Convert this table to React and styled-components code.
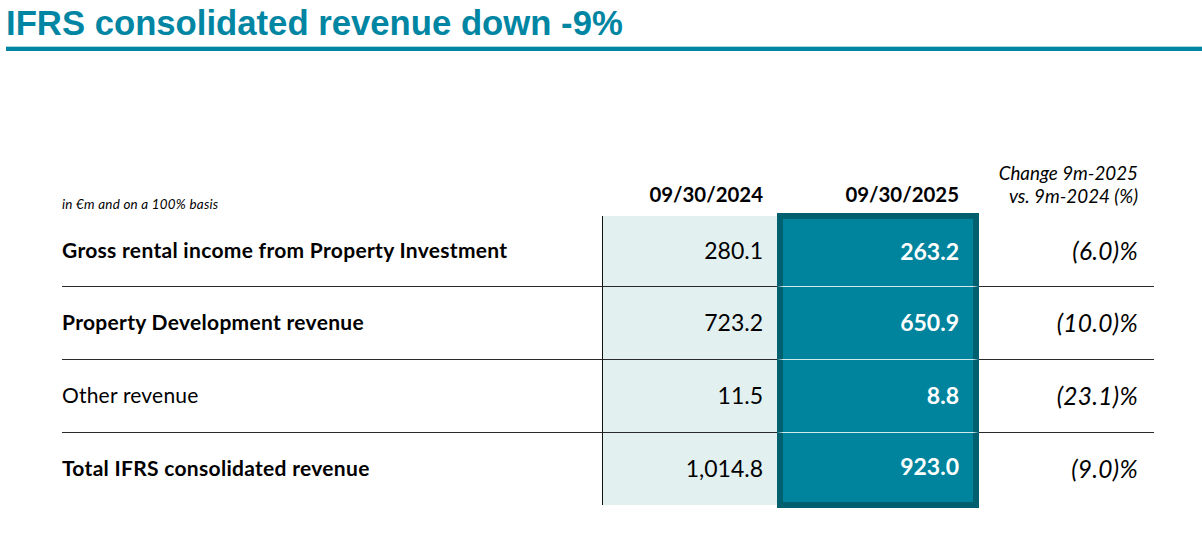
import React from "react";
import styled, { createGlobalStyle } from "styled-components";

const GlobalStyle = createGlobalStyle`
    html, body {
        margin: 0;
        padding: 0;
        background: #ffffff;
    }
    body {
        font-family: Lato, "Open Sans", sans-serif;
        color: #000;
    }
`;

const Page = styled.div`
    width: 1202px;
    height: 551px;
    overflow: hidden;
`;

const Title = styled.h1`
    margin: 0;
    padding: 3px 0 0 6px;
    font-family: "Liberation Sans", Arial, sans-serif;
    font-size: 34.7px;
    line-height: 40px;
    font-weight: 700;
    color: #0086a3;
    white-space: nowrap;
`;

const Rule = styled.div`
    margin: 3px 0 0 6px;
    height: 4px;
    background: #0086a3;
    border-top: 1px solid #a9d5df;
`;

const Table = styled.div`
    display: grid;
    grid-template-columns: 540px 175px 202px 175px;
    grid-template-rows: 67px 71px 73px 73px 72px;
    margin: 98px 0 0 62px;
`;

const Caption = styled.div`
    align-self: end;
    padding-bottom: 5px;
    font-size: 13.4px;
    line-height: 14px;
    letter-spacing: 0.25px;
    font-style: italic;
`;

const HeadDate = styled.div`
    align-self: end;
    padding: 0 ${p => p.$pad}px 10px 0;
    text-align: right;
    font-size: 20.4px;
    line-height: 24px;
    font-weight: 700;
`;

const HeadChange = styled.div`
    align-self: end;
    padding: 0 16px 9px 0;
    text-align: right;
    font-size: 18.8px;
    line-height: 23px;
    font-style: italic;
`;

const lineColor = "#2a2a2a";

const Label = styled.div`
    display: flex;
    align-items: center;
    padding-bottom: 3px;
    font-size: 21px;
    letter-spacing: ${p => (p.$bold ? "0.3px" : "0.2px")};
    font-weight: ${p => (p.$bold ? 700 : 400)};
    border-bottom: ${p => (p.$last ? "none" : `1px solid ${lineColor}`)};
`;

const LightCell = styled.div`
    display: flex;
    align-items: center;
    justify-content: flex-end;
    padding: 0 14px 3px 0;
    background: #e2f1f0;
    border-left: 1px solid #111;
    border-bottom: ${p => (p.$last ? "none" : `1px solid ${lineColor}`)};
    font-size: 23px;
`;

const DarkCell = styled.div`
    display: flex;
    align-items: center;
    justify-content: flex-end;
    padding: 0 14px 3px 0;
    background: #00849e;
    border-left: 6px solid #00606f;
    border-right: 6px solid #00606f;
    border-top: ${p => (p.$first ? "6px solid #00606f" : "none")};
    border-bottom: ${p => (p.$last ? "6px solid #00606f" : "1px solid #d4eaee")};
    margin-top: ${p => (p.$first ? "-3px" : "0")};
    margin-bottom: ${p => (p.$last ? "-3px" : "0")};
    color: #ffffff;
    font-size: 23px;
    font-weight: 700;
`;

const ChangeCell = styled.div`
    display: flex;
    align-items: center;
    justify-content: flex-end;
    padding: 0 16px 1px 0;
    border-bottom: ${p => (p.$last ? "none" : `1px solid ${lineColor}`)};
    font-size: 24.5px;
    letter-spacing: 0.3px;
    font-style: italic;
`;

const rows = [
    { label: "Gross rental income from Property Investment", bold: true, prev: "280.1", curr: "263.2", change: "(6.0)%" },
    { label: "Property Development revenue", bold: true, prev: "723.2", curr: "650.9", change: "(10.0)%" },
    { label: "Other revenue", bold: false, prev: "11.5", curr: "8.8", change: "(23.1)%" },
    { label: "Total IFRS consolidated revenue", bold: true, prev: "1,014.8", curr: "923.0", change: "(9.0)%" },
];

export default function App() {
    return (
        <Page>
            <GlobalStyle />
            <Title>IFRS consolidated revenue down -9%</Title>
            <Rule />
            <Table>
                <Caption>in €m and on a 100% basis</Caption>
                <HeadDate $pad={14}>09/30/2024</HeadDate>
                <HeadDate $pad={20}>09/30/2025</HeadDate>
                <HeadChange>
                    Change 9m-2025
                    <br />
                    vs. 9m-2024 (%)
                </HeadChange>

                {rows.map((row, i) => {
                    const first = i === 0;
                    const last = i === rows.length - 1;
                    return (
                        <React.Fragment key={row.label}>
                            <Label $bold={row.bold} $last={last}>{row.label}</Label>
                            <LightCell $last={last}>{row.prev}</LightCell>
                            <DarkCell $first={first} $last={last}>{row.curr}</DarkCell>
                            <ChangeCell $last={last}>{row.change}</ChangeCell>
                        </React.Fragment>
                    );
                })}
            </Table>
        </Page>
    );
}
